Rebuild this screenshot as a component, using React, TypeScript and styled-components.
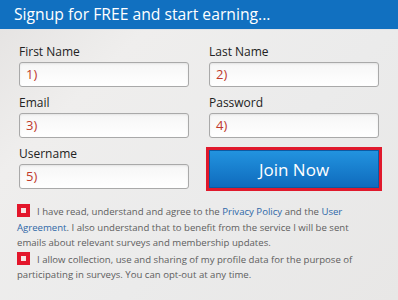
import React from 'react';
import styled, { createGlobalStyle } from 'styled-components';

const Global = createGlobalStyle`
  html, body {
    margin: 0;
    padding: 0;
    background: #ececec;
  }
  body {
    font-family: "Open Sans", "DejaVu Sans", sans-serif;
  }
`;

const Panel = styled.div`
  width: 398px;
  height: 300px;
  overflow: hidden;
  background: linear-gradient(135deg, #e4e2e1 0%, #efeeed 25%, #ebebeb 60%, #e8e7e6 100%);
`;

const Header = styled.div`
  height: 29px;
  background: #1170c0;
  color: #fff;
  font-size: 15.7px;
  line-height: 29px;
  padding-left: 14px;
  border-bottom: 1px solid #e1e4e8;
`;

const Form = styled.div`
  display: grid;
  grid-template-columns: 170px 170px;
  column-gap: 20px;
  row-gap: 7px;
  padding: 13px 0 0 19px;
`;

const Field = styled.div`
  display: flex;
  flex-direction: column;
`;

const Label = styled.label`
  font-size: 12px;
  color: #222;
  line-height: 17px;
  height: 19px;
`;

const Input = styled.div`
  height: 23px;
  border: 1px solid #a9a9a9;
  border-radius: 3px;
  background: linear-gradient(#f6f6f6, #ffffff);
  box-shadow: inset 0 1px 2px rgba(0, 0, 0, 0.08);
  color: #c0392b;
  font-size: 13px;
  line-height: 23px;
  padding-left: 6px;
`;

const JoinWrap = styled.div`
  margin: 2px 0 0 -3px;
  width: 170px;
  height: 38px;
  border: 3px solid #e0192c;
  background: #2175c4;
`;

const JoinButton = styled.button`
  width: 100%;
  height: 100%;
  border: 1px solid #0b5aa3;
  background: linear-gradient(#2293df, #0f6bbd);
  color: #fff;
  font-family: "Open Sans", sans-serif;
  font-size: 17px;
  padding: 0;
  cursor: pointer;
`;

const Terms = styled.div`
  padding: 13px 32px 0 17px;
  display: flex;
  flex-direction: column;
  gap: 1px;
`;

const Check = styled.p`
  margin: 0;
  font-size: 9.6px;
  line-height: 15.5px;
  color: #5e5e5e;
`;

const Box = styled.span`
  display: inline-block;
  width: 13px;
  height: 13px;
  box-sizing: border-box;
  background: #e3162b;
  border: 4px solid #e3162b;
  vertical-align: -2px;
  margin-right: 7px;
  &::after {
    content: '';
    display: block;
    width: 5px;
    height: 5px;
    background: #f6e4e4;
  }
`;

const Link = styled.a`
  color: #2e68a8;
  text-decoration: none;
`;

export default function App() {
  return (
    <>
      <Global />
      <Panel>
        <Header>Signup for FREE and start earning...</Header>
        <Form>
          <Field>
            <Label>First Name</Label>
            <Input>1)</Input>
          </Field>
          <Field>
            <Label>Last Name</Label>
            <Input>2)</Input>
          </Field>
          <Field>
            <Label>Email</Label>
            <Input>3)</Input>
          </Field>
          <Field>
            <Label>Password</Label>
            <Input>4)</Input>
          </Field>
          <Field>
            <Label>Username</Label>
            <Input>5)</Input>
          </Field>
          <Field>
            <JoinWrap>
              <JoinButton>Join Now</JoinButton>
            </JoinWrap>
          </Field>
        </Form>
        <Terms>
          <Check>
            <Box />I have read, understand and agree to the <Link>Privacy Policy</Link> and the <Link>User</Link>{' '}
            <Link>Agreement</Link>. I also understand that to benefit from the service I will be sent emails
            about relevant surveys and membership updates.
          </Check>
          <Check>
            <Box />I allow collection, use and sharing of my profile data for the purpose of participating in
            surveys. You can opt-out at any time.
          </Check>
        </Terms>
      </Panel>
    </>
  );
}
